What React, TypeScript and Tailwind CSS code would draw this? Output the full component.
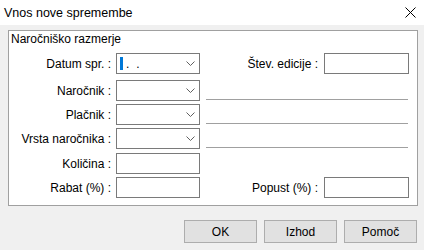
import React from 'react';

const Chevron = () => (
  <svg width="9" height="5" viewBox="0 0 9 5" className="mr-[4px]">
    <path d="M0.5 0.5 L4.5 4.5 L8.5 0.5" fill="none" stroke="#606060" strokeWidth="1" />
  </svg>
);

const Combo = ({ children }: { children?: React.ReactNode }) => (
  <div className="ml-[5px] flex h-[21px] w-[84px] items-center justify-between border border-[#7a7a7a] bg-white">
    <div className="flex items-center pl-[2px]">{children}</div>
    <Chevron />
  </div>
);

const Field = ({ w = 'w-[84px]', ml = 'ml-[5px]' }: { w?: string; ml?: string }) => (
  <div className={`${ml} ${w} h-[21px] border border-[#7a7a7a] bg-white`} />
);

const Label = ({ text }: { text: string }) => (
  <span className="w-[102px] text-right">{text}</span>
);

const Underline = () => (
  <div className="mb-[1px] ml-[6px] w-[202px] self-end border-b border-[#a0a0a0]" />
);

export default function App() {
  return (
    <div className="h-[250px] w-[424px] bg-[#f0f0f0] text-[12px] leading-[16px] text-black font-['Liberation_Sans',sans-serif]">
      {/* title bar */}
      <div className="flex h-[25px] items-center justify-between bg-white pl-[4px] pr-[8px]">
        <span className="text-[12.5px]">Vnos nove spremembe</span>
        <svg width="11" height="11" viewBox="0 0 11 11">
          <path d="M0.5 0.5 L10.5 10.5 M10.5 0.5 L0.5 10.5" stroke="#000" strokeWidth="1" />
        </svg>
      </div>

      <div className="px-[7px] pt-[5px] pl-[8px]">
        <div className="h-[176px] w-[410px] border border-[#a0a0a0] bg-white">
          <div className="pl-[2px]">Naročniško razmerje</div>

          <div className="mt-[6px] flex h-[21px] items-center">
            <Label text="Datum spr. :" />
            <Combo>
              <span className="ml-[1px] h-[13px] w-[3px] bg-[#0078d7]" />
              <span className="ml-[3px] leading-[14px]">.</span>
              <span className="ml-[7px] leading-[14px]">.</span>
            </Combo>
            <div className="flex flex-1 items-center justify-end pr-[8px]">
              <span>Štev. edicije :</span>
              <Field w="w-[85px]" ml="ml-[6px]" />
            </div>
          </div>

          <div className="mt-[6px] flex h-[21px] items-center">
            <Label text="Naročnik :" />
            <Combo />
            <Underline />
          </div>

          <div className="mt-[3px] flex h-[21px] items-center">
            <Label text="Plačnik :" />
            <Combo />
            <Underline />
          </div>

          <div className="mt-[3px] flex h-[21px] items-center">
            <Label text="Vrsta naročnika :" />
            <Combo />
            <Underline />
          </div>

          <div className="mt-[4px] flex h-[21px] items-center">
            <Label text="Količina :" />
            <Field />
          </div>

          <div className="mt-[3px] flex h-[21px] items-center">
            <Label text="Rabat (%) :" />
            <Field />
            <div className="flex flex-1 items-center justify-end pr-[8px]">
              <span>Popust (%) :</span>
              <Field w="w-[85px]" ml="ml-[6px]" />
            </div>
          </div>
        </div>
      </div>

      {/* buttons */}
      <div className="mt-[14px] flex justify-end gap-[7px] pr-[7px]">
        {['OK', 'Izhod', 'Pomoč'].map((b) => (
          <button
            key={b}
            className="h-[23px] w-[73px] border border-[#adadad] bg-[#e1e1e1] text-[12px]"
          >
            {b}
          </button>
        ))}
      </div>
    </div>
  );
}
